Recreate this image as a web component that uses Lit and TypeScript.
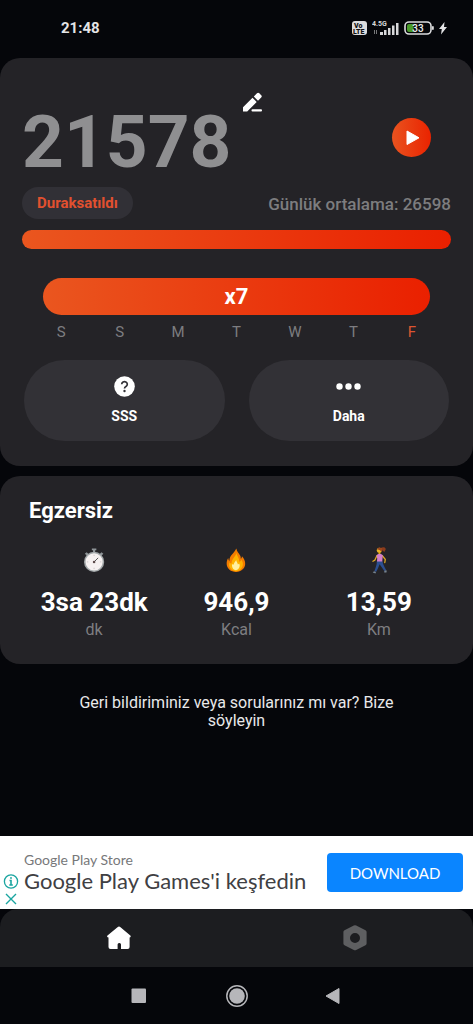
import { LitElement, html, css, svg } from "lit";
import { customElement, property } from "lit/decorators.js";
import { classMap } from "lit/directives/class-map.js";

@customElement("status-bar")
class StatusBar extends LitElement {
  static styles = css`
    :host {
      display: flex;
      justify-content: space-between;
      align-items: center;
      height: 56px;
      padding: 0 26px 0 61px;
      box-sizing: border-box;
    }
    .time {
      font-size: 15px;
      font-weight: 700;
      color: #e4e4e6;
    }
    .status {
      display: flex;
      align-items: center;
      gap: 5px;
    }
    svg {
      display: block;
    }
  `;
  render() {
    return html`
      <span class="time">21:48</span>
      <div class="status">
        <svg width="15" height="14" viewBox="0 0 15 14">
          <rect width="15" height="14" rx="3" fill="#dcdcde" />
          <text x="2" y="7" font-size="7" font-weight="900" fill="#111">Vo</text>
          <text x="1" y="13" font-size="7" font-weight="900" fill="#111">LTE</text>
        </svg>
        <svg width="27" height="15" viewBox="0 0 27 15">
          <text x="0" y="5" font-size="7" font-weight="700" fill="#d8d8da">4.5G</text>
          <path d="M2.500 9v4M4.500 9v4" stroke="#77777a" />
          <path d="M8 14v-3h3v3zM12 14V9h2.500v5zM16 14V7h2.500v7zM20 14V4.500h2.500V14zM24 14V2h2.500v12z" fill="#d8d8da" />
        </svg>
        <svg width="30" height="14" viewBox="0 0 30 14">
          <rect x="1" y="1" width="26" height="12" rx="4" fill="none" stroke="#dcdcde" stroke-width="1.600" />
          <path d="M5 3h4.500v8H5a2 2 0 0 1-2-2V5a2 2 0 0 1 2-2z" fill="#4a9b2a" />
          <rect x="28" y="5" width="1.800" height="4" rx=".9" fill="#dcdcde" />
          <text x="14" y="10.500" font-size="10" font-weight="500" text-anchor="middle" fill="#eee">33</text>
        </svg>
        <svg width="8" height="14" viewBox="0 0 8 14">
          <path d="M5.500 1 0 8h2.800L2 13.500 8 6H5z" fill="#e4e4e6" />
        </svg>
      </div>
    `;
  }
}

@customElement("step-card")
class StepCard extends LitElement {
  @property({ type: Number }) steps = 21578;
  @property({ type: Number }) average = 26598;
  private days = ["S", "S", "M", "T", "W", "T", "F"];

  static styles = css`
    :host {
      display: block;
      background: #242327;
      border-radius: 20px;
      padding: 32px 22px 25px;
    }
    button {
      font: inherit;
      color: inherit;
      border: 0;
      padding: 0;
      margin: 0;
      background: none;
      cursor: pointer;
    }
    svg {
      display: block;
    }
    .top {
      display: flex;
      align-items: flex-end;
      justify-content: space-between;
      padding-right: 20px;
    }
    .count {
      display: flex;
      align-items: flex-start;
      gap: 10px;
    }
    .steps {
      font-size: 73px;
      line-height: 72px;
      font-weight: 700;
      color: #8f8f91;
      padding-top: 16px;
    }
    .play {
      display: grid;
      place-items: center;
      width: 39px;
      height: 39px;
      margin-bottom: 21px;
      border-radius: 50%;
      background: linear-gradient(90deg, #e9531f, #ea2300);
    }
    .summary {
      display: flex;
      align-items: center;
      justify-content: space-between;
      margin-top: 9px;
    }
    .state {
      padding: 0 15px;
      border-radius: 16px;
      line-height: 32px;
      font-size: 15px;
      font-weight: 700;
      color: #e2502f;
      background: #313036;
    }
    .average {
      font-size: 17px;
      font-weight: 500;
      line-height: 20px;
      padding-top: 2px;
      color: #7d7d7f;
    }
    .bar {
      height: 19px;
      margin-top: 11px;
      border-radius: 10px;
      background: linear-gradient(90deg, #ea561f, #ea2000);
    }
    .streak {
      margin: 29px 21px 0;
      border-radius: 19px;
      background: linear-gradient(90deg, #ea561f, #ea2000);
      color: #fff;
      font-size: 22px;
      line-height: 37px;
      font-weight: 700;
      text-align: center;
    }
    .days {
      display: grid;
      grid-template-columns: repeat(7, 1fr);
      margin: 7px 10px 0;
      padding: 0;
      list-style: none;
      text-align: center;
      font-size: 15px;
      line-height: 20px;
      color: #7d7d80;
    }
    .today {
      color: #dc5530;
    }
    .actions {
      display: grid;
      grid-template-columns: 1fr 1fr;
      gap: 24px;
      margin: 18px 2px 0;
    }
    .action {
      display: flex;
      flex-direction: column;
      align-items: center;
      gap: 9px;
      padding: 16px 0 15px;
      border-radius: 41px;
      background: #323136;
      color: #fff;
      font-size: 14px;
      line-height: 20px;
      font-weight: 700;
    }
  `;

  render() {
    return html`
      <div class="top">
        <div class="count">
          <span class="steps">${this.steps}</span>
          <button aria-label="Düzenle">
            <svg width="24" height="24" viewBox="0 0 24 24" fill="#fff">
              <path d="M2 21.500v-4.200L11.500 7.800l4.200 4.200L6.200 21.500zM12.800 6.500l3.200-3.200a1.600 1.600 0 0 1 2.300 0l1.900 1.900a1.600 1.600 0 0 1 0 2.300L17 10.700z" />
              <rect x="10.500" y="19.200" width="10.500" height="2.300" rx="1" />
            </svg>
          </button>
        </div>
        <button class="play" aria-label="Başlat">
          <svg width="39" height="39" viewBox="0 0 39 39">
            <path d="M15 13v13.500l12-6.700z" fill="#fff" stroke="#fff" stroke-width="1" stroke-linejoin="round" />
          </svg>
        </button>
      </div>
      <div class="summary">
        <span class="state">Duraksatıldı</span>
        <span class="average">Günlük ortalama: ${this.average}</span>
      </div>
      <div class="bar" role="progressbar" aria-valuenow="100"></div>
      <div class="streak">x7</div>
      <ul class="days">
        ${this.days.map(
          (d, i) => html`<li class=${classMap({ today: i === this.days.length - 1 })}>${d}</li>`
        )}
      </ul>
      <div class="actions">
        <button class="action">
          <svg width="21" height="21" viewBox="0 0 21 21">
            <circle cx="10.500" cy="10.500" r="10.300" fill="#fff" />
            <path d="M7.700 8.200a2.800 2.600 0 1 1 4.300 2.200c-1 .7-1.500 1.100-1.500 2.100" fill="none" stroke="#323136" stroke-width="1.700" />
            <circle cx="10.500" cy="15" r="1.200" fill="#323136" />
          </svg>
          SSS
        </button>
        <button class="action">
          <svg width="25" height="21" viewBox="0 0 25 21" fill="#fff">
            <circle cx="3.500" cy="10.500" r="3.200" />
            <circle cx="12.500" cy="10.500" r="3.200" />
            <circle cx="21.500" cy="10.500" r="3.200" />
          </svg>
          Daha
        </button>
      </div>
    `;
  }
}

const stopwatch = svg`
  <g transform="translate(1.500 1.500) scale(.9)">
    <path d="M11.500 1h5v2h-1.300v4h-2.400V3h-1.300z" fill="#8e9497" />
    <path d="m3.700 7 2-1.800 2.300 2-2 2zM24.300 7l-2-1.800-2.300 2 2 2z" fill="#8e9497" />
    <circle cx="14" cy="16" r="11.200" fill="#a3a8aa" />
    <circle cx="14" cy="16" r="9.500" fill="#f6f1f1" />
    <path d="M14 8v1.500M14 22.500V24M6 16h1.500M20.500 16H22" stroke="#c9c4c4" />
    <path d="m13 17 5.500-5.500" stroke="#555" stroke-width="1.100" />
    <circle cx="14" cy="16" r="1.400" fill="#5d4a4a" />
  </g>
`;

const flame = svg`
  <g transform="translate(1 1.500) scale(.92)">
    <path d="M14.500 1.200c.4 3.400 2.700 5 4.100 7.600.7 1.300.8 2.400.7 3.500.8-.5 1.300-1.500 1.300-2.800 2.300 2.500 3.700 5.600 3.500 8.700-.3 4.500-4.300 8.300-9.900 8.300S4.300 22.700 4 18.100c-.2-2.900.6-5 1.700-6.800.1 1.500.5 2.600 1.400 3.200-.5-5.600 4.600-7.400 7.400-13.300z" fill="#f57c00" />
    <path d="M14.600 6c.4 3.400 3.300 5 3 9.600 1.100-.4 1.900-1.200 2.300-2.400 1.500 2.100 2 4 1.600 6-.6 3.300-3.600 6.500-7.400 6.500-4.100 0-7.200-3.300-7.500-6.600-.1-1.200.1-2.100.6-3.100.5.900 1.200 1.300 2.200 1.500-.5-4.800 4-6.900 5.200-11.500z" fill="#ffb300" />
    <path d="M14.300 13.500c.3 2.200 1.700 3 1.900 5 .6-.2 1-.6 1.300-1.100.7 1 .9 2 .6 3-.5 2.500-2 4.200-4.100 4.200-2.300 0-4-1.900-4.200-4.400-.1-.9.100-1.600.5-2.300.3.500.8.700 1.400.7-.1-2.100 1.800-3 2.600-5.100z" fill="#fff0a0" />
  </g>
`;

const walker = svg`
  <path d="M15.500 2.200c2-1.700 5-1.200 5.200.8.100 1.500-1.200 1.700-1.300 3.300-.9-1-1.500-1.800-2.700-2z" fill="#8a3b1c" />
  <circle cx="14.300" cy="4.300" r="2.500" fill="#e9b325" />
  <path d="M12.200 3.400c.2-2.400 4.600-2.800 5 .4l-.9 2.400c-.3-1.800-1.900-2.700-4.100-2.800z" fill="#9a451d" />
  <path d="M13.500 6h1.900v3h-1.900z" fill="#e0a51c" />
  <path d="m12 9.600-2.100 4.500-2 1.100M17.300 9.700l3 3.800-.5 3" fill="none" stroke="#dfa924" stroke-width="1.300" stroke-linecap="round" stroke-linejoin="round" />
  <path d="M11.500 9.200c1.200-1.500 5.200-1.700 6.300.3l-.6 7h-5.300l.3-4z" fill="#d27fc8" />
  <path d="M11.900 15.500h5.500c.5 2.600 2 5.300 3.700 8.600l-1.700.9-4.800-6.800-1.600 4.100-1.800 3.500-1.800-.6c1.100-3.400 2.300-5.700 2.500-9.700z" fill="#2c4f90" />
  <path d="m9 25.200 2 .7-.5 1.500-2.800-.8zM19.200 25l2.100-1.100.5 2.300-2.300.6z" fill="#76838f" />
`;

@customElement("exercise-card")
class ExerciseCard extends LitElement {
  private metrics = [
    { icon: stopwatch, value: "3sa 23dk", unit: "dk" },
    { icon: flame, value: "946,9", unit: "Kcal" },
    { icon: walker, value: "13,59", unit: "Km" },
  ];
  static styles = css`
    :host {
      display: block;
      background: #242327;
      border-radius: 20px;
      padding: 20px 23px 24px;
    }
    h2 {
      margin: 0 6px;
      font-size: 22px;
      line-height: 30px;
      font-weight: 700;
      color: #fff;
    }
    .metrics {
      display: grid;
      grid-template-columns: repeat(3, 1fr);
      margin-top: 20px;
    }
    .metric {
      display: flex;
      flex-direction: column;
      align-items: center;
    }
    svg {
      display: block;
    }
    .value {
      margin-top: 10px;
      font-size: 26px;
      line-height: 36px;
      font-weight: 700;
      color: #fff;
      white-space: nowrap;
    }
    .unit {
      font-size: 16px;
      line-height: 20px;
      color: #7e7e81;
    }
  `;
  render() {
    return html`
      <h2>Egzersiz</h2>
      <div class="metrics">
        ${this.metrics.map(
          (m) => html`
            <div class="metric">
              <svg width="28" height="28" viewBox="0 0 28 28">${m.icon}</svg>
              <span class="value">${m.value}</span>
              <span class="unit">${m.unit}</span>
            </div>
          `
        )}
      </div>
    `;
  }
}

@customElement("ad-banner")
class AdBanner extends LitElement {
  static styles = css`
    :host {
      display: flex;
      align-items: center;
      gap: 5px;
      height: 73px;
      box-sizing: border-box;
      padding: 0 10px 0 3px;
      background: #fff;
      font-family: Lato, "Noto Sans", sans-serif;
    }
    .marks {
      display: flex;
      flex-direction: column;
      align-self: flex-end;
      padding-bottom: 2px;
    }
    button {
      font: inherit;
      border: 0;
      padding: 0;
      background: none;
      cursor: pointer;
    }
    svg {
      display: block;
    }
    .copy {
      flex: 1;
      min-width: 0;
      white-space: nowrap;
      padding-bottom: 2px;
    }
    .source {
      font-size: 14px;
      line-height: 18px;
      color: #77787a;
    }
    .title {
      font-size: 22px;
      line-height: 24px;
      color: #3f4043;
    }
    .download {
      width: 136px;
      height: 39px;
      border-radius: 4px;
      background: #0a85ff;
      color: #fff;
      font-size: 15px;
    }
  `;
  render() {
    return html`
      <div class="marks">
        <button aria-label="Reklam bilgisi">
          <svg width="16" height="18" viewBox="0 0 16 18" fill="none" stroke="#1aa5a0">
            <circle cx="8" cy="8.500" r="6.600" stroke-width="1.300" />
            <path d="M6.500 7.500H8v4.500M6.300 12h3.500" stroke-width="1.600" />
            <circle cx="8" cy="5" r=".6" />
          </svg>
        </button>
        <button aria-label="Reklamı kapat">
          <svg width="16" height="16" viewBox="0 0 16 16">
            <path d="m3 3 10 10M13 3 3 13" stroke="#1aa5a0" stroke-width="1.400" />
          </svg>
        </button>
      </div>
      <div class="copy">
        <div class="source">Google Play Store</div>
        <div class="title">Google Play Games'i keşfedin</div>
      </div>
      <button class="download">DOWNLOAD</button>
    `;
  }
}

@customElement("app-root")
class AppRoot extends LitElement {
  static styles = css`
    :host {
      display: flex;
      flex-direction: column;
      min-height: 100vh;
      background: #05060a;
      color: #fff;
      font-family: Roboto, "Noto Sans", sans-serif;
    }
    main {
      flex: 1;
      display: flex;
      flex-direction: column;
      gap: 10px;
      padding-top: 2px;
    }
    .feedback {
      margin: 20px 70px;
      font-size: 16px;
      line-height: 18px;
      text-align: center;
      color: #e9e9ea;
      text-decoration: none;
    }
    button {
      border: 0;
      padding: 0;
      background: none;
      cursor: pointer;
    }
    svg {
      display: block;
    }
    .tabs {
      display: grid;
      grid-template-columns: 1fr 1fr;
      height: 58px;
      background: #1c1d20;
      border-radius: 18px 18px 0 0;
    }
    .tab {
      display: grid;
      place-items: center;
    }
    .system {
      display: flex;
      align-items: center;
      justify-content: center;
      gap: 74px;
      height: 57px;
    }
  `;
  render() {
    return html`
      <status-bar></status-bar>
      <main>
        <step-card></step-card>
        <exercise-card></exercise-card>
        <a class="feedback" href="#feedback">Geri bildiriminiz veya sorularınız mı var? Bize söyleyin</a>
      </main>
      <ad-banner></ad-banner>
      <nav class="tabs">
        <a class="tab" href="#home" aria-label="Ana sayfa">
          <svg width="28" height="28" viewBox="0 0 28 28">
            <path d="M13.500 3.300a2.200 2.200 0 0 1 3 0l9.800 8.300c.8.700.4 1.900-.7 1.900V23a2 2 0 0 1-2 2H17v-4.500a1.500 1.500 0 0 0-1.500-1.500h-.4a1.500 1.500 0 0 0-1.500 1.500V25H6.500a2 2 0 0 1-2-2v-9.500c-1.400 0-1.800-1.200-1-1.900z" fill="#fff" />
          </svg>
        </a>
        <a class="tab" href="#settings" aria-label="Ayarlar">
          <svg width="28" height="28" viewBox="0 0 28 28">
            <path d="M12.800 1.500a2.400 2.400 0 0 1 2.400 0l9.300 4.800a2 2 0 0 1 1.100 1.800v11.300a2 2 0 0 1-1.100 1.800L15.200 26a2.400 2.400 0 0 1-2.400 0l-9.300-4.800a2 2 0 0 1-1.100-1.800V8.100a2 2 0 0 1 1.100-1.800zM14 9a5 5 0 1 0 0 10 5 5 0 0 0 0-10z" fill="#5e5f61" fill-rule="evenodd" />
          </svg>
        </a>
      </nav>
      <div class="system">
        <button aria-label="Son uygulamalar">
          <svg width="24" height="24" viewBox="0 0 24 24"><rect x="4.500" y="4.500" width="14.500" height="14.500" rx="1" fill="#b6b6ba" /></svg>
        </button>
        <button aria-label="Ana ekran">
          <svg width="24" height="24" viewBox="0 0 24 24">
            <circle cx="12" cy="12" r="10.200" fill="none" stroke="#b6b6ba" stroke-width="1.500" />
            <circle cx="12" cy="12" r="7.800" fill="#b6b6ba" />
          </svg>
        </button>
        <button aria-label="Geri">
          <svg width="24" height="24" viewBox="0 0 24 24"><path d="M3 12 16 4.500v15z" fill="#b6b6ba" stroke="#b6b6ba" stroke-linejoin="round" /></svg>
        </button>
      </div>
    `;
  }
}
